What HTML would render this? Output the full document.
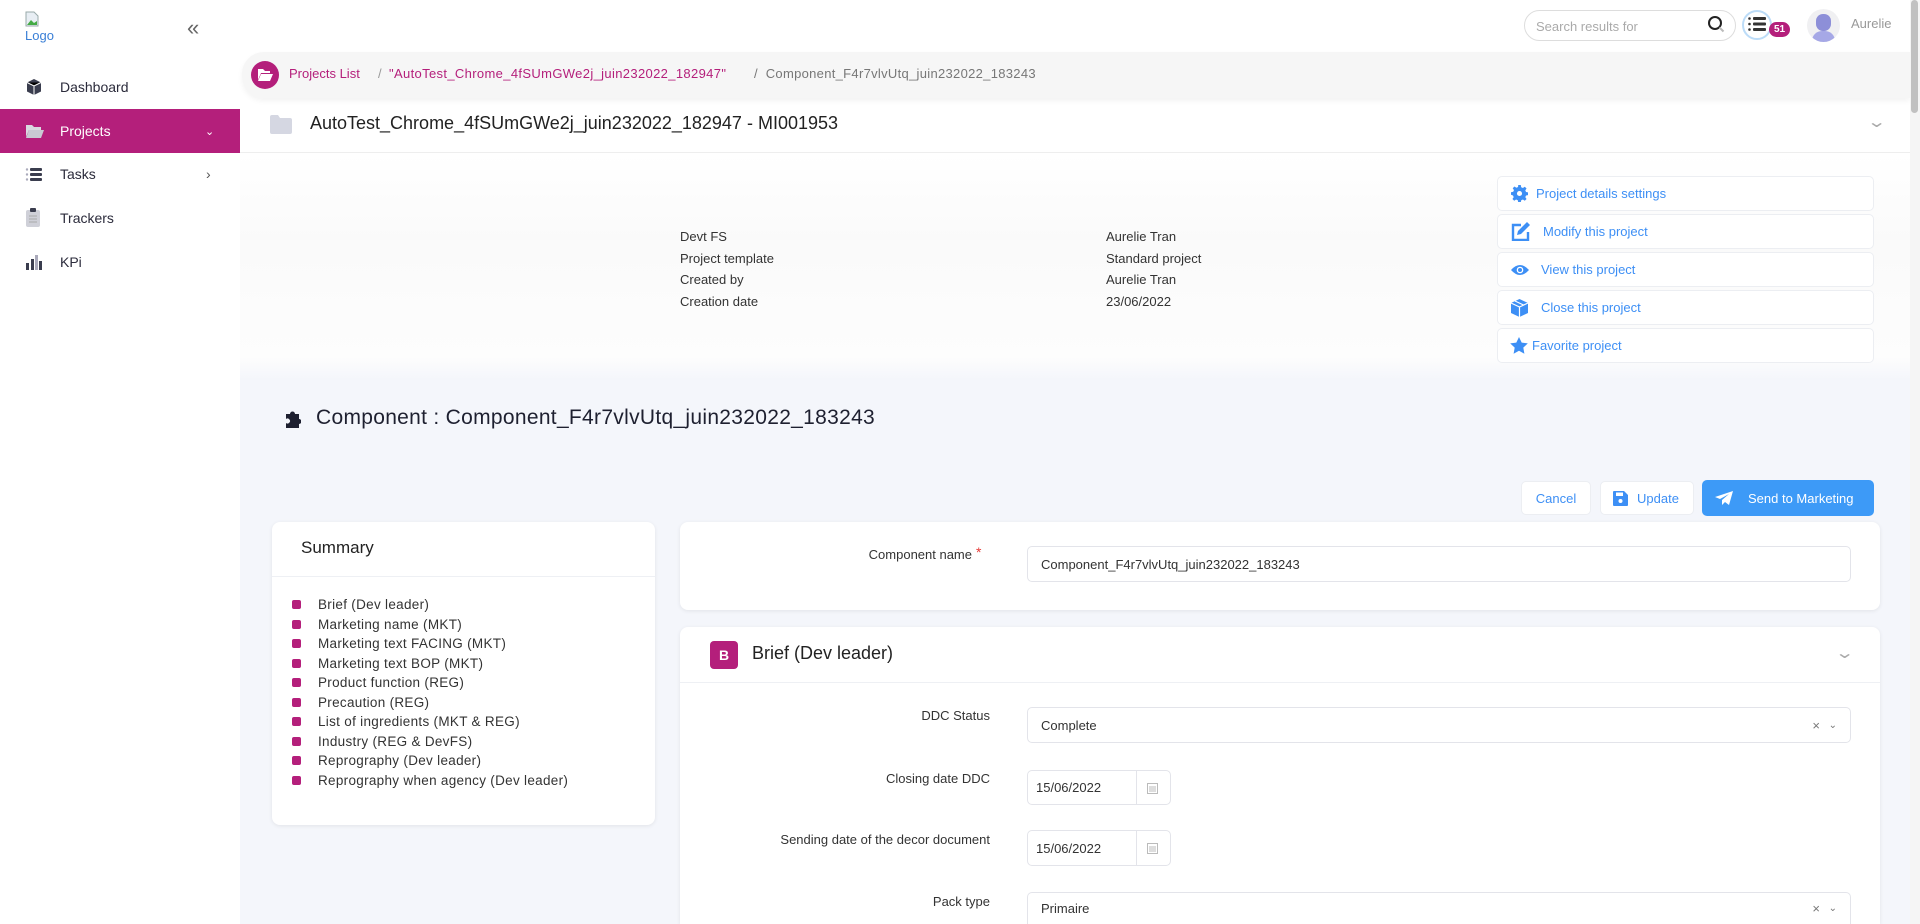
<!DOCTYPE html>
<html style="overflow:hidden;height:924px"><head><meta charset="utf-8"><style>
*{box-sizing:border-box;margin:0;padding:0}
body{width:1920px;height:924px;overflow:hidden;font-family:"Liberation Sans",sans-serif;background:#fff;position:relative;color:#222}
.a{position:absolute}
.side{left:0;top:0;width:240px;height:924px;background:#fff}
.nav{left:0;width:240px;height:44px;display:flex;align-items:center;font-size:14px;color:#2b2b3b}
.nav svg{position:absolute;left:25px}
.nav span{position:absolute;left:60px}
.proj{background:#b41f7b;color:#fff}
.lbl{font-size:13px;color:#333}
.btn{border:1px solid #eceef2;border-radius:5px;background:#fff;color:#3d8ff5;font-size:13px;display:flex;align-items:center}
.card{background:#fff;border-radius:8px;box-shadow:0 1px 4px rgba(0,0,0,.08)}
.li{left:292px;font-size:13.5px;letter-spacing:.3px;color:#333;display:flex;align-items:center}
.li i{width:9px;height:9px;background:#b41f7b;border-radius:2px;margin-right:17px;display:inline-block}
.in{border:1px solid #e3e4ea;border-radius:5px;background:#fff;font-size:13px;color:#333;display:flex;align-items:center;padding-left:13px}
.fl{font-size:13px;color:#333;text-align:right;width:300px}
</style></head><body>
<div class="a side"></div>
<svg class="a" style="left:25px;top:11px" width="14" height="16" viewBox="0 0 14 16"><path d="M1 1h8l4 4v10H1z" fill="#e8eef4" stroke="#9aa" stroke-width="1"/><path d="M2 14l4-5 3 3 3-2v4z" fill="#4a4"/></svg>
<div class="a" style="left:25px;top:28px;font-size:13px;color:#3a7fd6">Logo</div>
<div class="a" style="left:187px;top:15px;font-size:22px;color:#666">«</div>
<div class="a nav" style="top:65px"><svg width="18" height="18" viewBox="0 0 18 18"><path d="M9 1l7 3.5v9L9 17 2 13.5v-9z" fill="#3a3d4e"/><path d="M2 4.5L9 8l7-3.5M9 8v9" stroke="#fff" stroke-width="1"/></svg><span>Dashboard</span></div>
<div class="a nav proj" style="top:109px"><svg width="19" height="16" viewBox="0 0 19 16"><path d="M1 2h6l2 2h7v3H4L1 14z" fill="#d9d9e0"/><path d="M4 7h15l-3 8H1z" fill="#c9c9d3"/></svg><span>Projects</span><b class="a" style="left:205px;font-weight:normal;font-size:11px">&#8964;</b></div>
<div class="a nav" style="top:152px"><svg width="18" height="16" viewBox="0 0 18 16"><g fill="#3a3d4e"><rect x="5" y="2" width="12" height="3" rx="1"/><rect x="5" y="7" width="12" height="3" rx="1"/><rect x="5" y="12" width="12" height="3" rx="1"/></g><g fill="#aab"><circle cx="2" cy="3.5" r="1.2"/><circle cx="2" cy="8.5" r="1.2"/><circle cx="2" cy="13.5" r="1.2"/></g></svg><span>Tasks</span><b class="a" style="left:206px;font-weight:normal;color:#555">›</b></div>
<div class="a nav" style="top:196px"><svg width="16" height="20" viewBox="0 0 16 20"><rect x="1" y="2" width="14" height="17" rx="2" fill="#cfd0d8"/><rect x="5" y="0" width="6" height="4" rx="1" fill="#3a3d4e"/><path d="M4 8h8M4 11h8M4 14h8" stroke="#aaa"/></svg><span>Trackers</span></div>
<div class="a nav" style="top:240px"><svg width="18" height="16" viewBox="0 0 18 16"><g fill="#3a3d4e"><rect x="1" y="9" width="3" height="7"/><rect x="6" y="5" width="3" height="11"/><rect x="14" y="7" width="3" height="9"/></g><rect x="10" y="1" width="3" height="15" fill="#aab"/></svg><span>KPi</span></div>

<div class="a" style="left:1524px;top:10px;width:212px;height:31px;border:1px solid #ddd;border-radius:16px;font-size:13px;color:#aaa;padding:8px 11px">Search results for</div>
<svg class="a" style="left:1707px;top:15px" width="18" height="18" viewBox="0 0 18 18"><circle cx="8" cy="8" r="6" fill="none" stroke="#222" stroke-width="2"/><path d="M12.5 12.5l4 4" stroke="#bbb" stroke-width="2"/></svg>
<div class="a" style="left:1742px;top:10px;width:30px;height:30px;border-radius:50%;border:2px solid #bcdcf8"></div>
<svg class="a" style="left:1748px;top:17px" width="18" height="14" viewBox="0 0 18 14"><g fill="#333"><rect x="5" y="0" width="13" height="3" rx="1"/><rect x="5" y="5.5" width="13" height="3" rx="1"/><rect x="5" y="11" width="13" height="3" rx="1"/><circle cx="1.5" cy="1.5" r="1.3"/><circle cx="1.5" cy="7" r="1.3"/><circle cx="1.5" cy="12.5" r="1.3"/></g></svg>
<div class="a" style="left:1769px;top:22px;width:21px;height:15px;border-radius:8px;background:#b41f7b;color:#fff;font-size:10px;font-weight:bold;text-align:center;line-height:15px">51</div>
<div class="a" style="left:1807px;top:9px;width:33px;height:33px;border-radius:50%;background:#f0f0f2;overflow:hidden"><div class="a" style="left:9px;top:5px;width:15px;height:17px;border-radius:7px;background:#8d8fd8"></div><div class="a" style="left:5px;top:22px;width:23px;height:14px;border-radius:10px 10px 0 0;background:#a6a8e6"></div></div>
<div class="a" style="left:1851px;top:16px;font-size:13px;color:#999">Aurelie</div>

<div class="a" style="left:242px;top:52px;width:1668px;height:46px;background:#f6f6f6;border-radius:22px 0 0 22px;box-shadow:0 3px 6px rgba(0,0,0,.05)"></div>
<div class="a" style="left:251px;top:61px;width:28px;height:28px;border-radius:50%;background:#b41f7b"></div>
<svg class="a" style="left:257px;top:68px" width="16" height="14" viewBox="0 0 16 14"><path d="M1 1h5l2 2h5v2H4L1 12z" fill="#fff"/><path d="M4 6h12l-3 7H1z" fill="#fff"/></svg>
<div class="a" style="left:289px;top:66px;font-size:13px;color:#b41f7b">Projects List</div>
<div class="a" style="left:378px;top:66px;font-size:13px;color:#999">/</div>
<div class="a" style="left:389px;top:66px;font-size:13px;letter-spacing:.35px;color:#b41f7b">"AutoTest_Chrome_4fSUmGWe2j_juin232022_182947"</div>
<div class="a" style="left:754px;top:66px;font-size:13px;letter-spacing:.3px;color:#777">/ &nbsp;Component_F4r7vlvUtq_juin232022_183243</div>

<svg class="a" style="left:270px;top:115px" width="22" height="19" viewBox="0 0 22 19"><path d="M0 2a2 2 0 012-2h6l2 3h10a2 2 0 012 2v12a2 2 0 01-2 2H2a2 2 0 01-2-2z" fill="#d5d7e2"/></svg>
<div class="a" style="left:310px;top:113px;font-size:18px;color:#222">AutoTest_Chrome_4fSUmGWe2j_juin232022_182947 - MI001953</div>
<div class="a" style="left:1870px;top:112px;font-size:16px;color:#aaa;transform:scaleX(1.5)">&#8964;</div>
<div class="a" style="left:240px;top:152px;width:1670px;height:1px;background:#eee"></div>
<div class="a" style="left:240px;top:153px;width:1670px;height:227px;background:linear-gradient(#fff,#fafafa 40%,#fdfdfd 90%,#f4f6fb)"></div>

<div class="a lbl" style="left:680px;top:226px;line-height:21.5px">Devt FS<br>Project template<br>Created by<br>Creation date</div>
<div class="a lbl" style="left:1106px;top:226px;line-height:21.5px">Aurelie Tran<br>Standard project<br>Aurelie Tran<br>23/06/2022</div>

<div class="a btn" style="left:1497px;top:176px;width:377px;height:35px;padding-left:13px"><svg width="17" height="17" viewBox="0 0 20 20"><path fill="#3d8ff5" d="M8.5 0h3l.5 2.6 2 .9 2.2-1.5 2.1 2.1-1.5 2.2.9 2 2.6.5v3l-2.6.5-.9 2 1.5 2.2-2.1 2.1-2.2-1.5-2 .9-.5 2.6h-3l-.5-2.6-2-.9-2.2 1.5-2.1-2.1 1.5-2.2-.9-2L0 11.5v-3l2.6-.5.9-2L2 3.8 4.1 1.7 6.3 3.2l2-.9z"/><circle cx="10" cy="10" r="3" fill="#fff"/></svg><span style="margin-left:8px">Project details settings</span></div>
<div class="a btn" style="left:1497px;top:214px;width:377px;height:35px;padding-left:13px"><svg width="20" height="19" viewBox="0 0 20 19"><path d="M10 3H2v15h15v-8" fill="none" stroke="#3d8ff5" stroke-width="2.4"/><path d="M16 0l3 3-9 9-4 1 1-4z" fill="#3d8ff5"/></svg><span style="margin-left:12px">Modify this project</span></div>
<div class="a btn" style="left:1497px;top:252px;width:377px;height:35px;padding-left:13px"><svg width="18" height="12" viewBox="0 0 18 12"><path d="M0 6Q9-4 18 6 9 16 0 6z" fill="#3d8ff5"/><circle cx="9" cy="6" r="3.3" fill="#fff"/><circle cx="9" cy="6" r="2" fill="#3d8ff5"/></svg><span style="margin-left:12px">View this project</span></div>
<div class="a btn" style="left:1497px;top:290px;width:377px;height:35px;padding-left:13px"><svg width="17" height="18" viewBox="0 0 17 18"><path d="M8.5 0L17 4v10l-8.5 4L0 14V4z" fill="#3d8ff5"/><path d="M0 4l8.5 4L17 4M8.5 8v10M4 2l8.5 4" stroke="#fff" stroke-width="1.2" fill="none"/></svg><span style="margin-left:13px">Close this project</span></div>
<div class="a btn" style="left:1497px;top:328px;width:377px;height:35px;padding-left:12px"><svg width="18" height="17" viewBox="0 0 18 17"><path d="M9 0l2.7 5.6 6.1.8-4.5 4.2 1.1 6.1L9 13.8l-5.4 2.9 1.1-6.1L.2 6.4l6.1-.8z" fill="#3d8ff5"/></svg><span style="margin-left:4px">Favorite project</span></div>

<div class="a" style="left:240px;top:380px;width:1670px;height:544px;background:#f4f6fb"></div>
<svg class="a" style="left:284px;top:410px" width="17" height="18" viewBox="0 0 17 18"><path d="M2 4h4a2.5 2.5 0 115 0h4v5a2.5 2.5 0 110 5v4H2v-5a2.5 2.5 0 100-4z" fill="#1e2030"/></svg>
<div class="a" style="left:316px;top:406px;font-size:21px;letter-spacing:.3px;color:#1e2030">Component : Component_F4r7vlvUtq_juin232022_183243</div>

<div class="a btn" style="left:1521px;top:481px;width:70px;height:34px;justify-content:center">Cancel</div>
<div class="a btn" style="left:1600px;top:481px;width:94px;height:34px;padding-left:12px"><svg width="15" height="15" viewBox="0 0 15 15"><path d="M0 1a1 1 0 011-1h10l4 4v10a1 1 0 01-1 1H1a1 1 0 01-1-1z" fill="#3d8ff5"/><rect x="3" y="1.5" width="7" height="3.5" fill="#fff"/><circle cx="7.5" cy="10" r="2" fill="#fff"/></svg><span style="margin-left:9px">Update</span></div>
<div class="a btn" style="left:1702px;top:480px;width:172px;height:36px;background:#3d9af7;border-color:#3d9af7;color:#fff;padding-left:12px"><svg width="18" height="14" viewBox="0 0 18 14"><path d="M18 0L0 6l5 2 9-5-7 6v5l3-3 4 3z" fill="#fff"/></svg><span style="margin-left:15px">Send to Marketing</span></div>

<div class="a card" style="left:272px;top:522px;width:383px;height:303px"></div>
<div class="a" style="left:301px;top:538px;font-size:17px;color:#222">Summary</div>
<div class="a" style="left:272px;top:576px;width:383px;height:1px;background:#eef0f4"></div>
<div class="a li" style="top:597px"><i></i>Brief (Dev leader)</div>
<div class="a li" style="top:617px"><i></i>Marketing name (MKT)</div>
<div class="a li" style="top:636px"><i></i>Marketing text FACING (MKT)</div>
<div class="a li" style="top:656px"><i></i>Marketing text BOP (MKT)</div>
<div class="a li" style="top:675px"><i></i>Product function (REG)</div>
<div class="a li" style="top:695px"><i></i>Precaution (REG)</div>
<div class="a li" style="top:714px"><i></i>List of ingredients (MKT &amp; REG)</div>
<div class="a li" style="top:734px"><i></i>Industry (REG &amp; DevFS)</div>
<div class="a li" style="top:753px"><i></i>Reprography (Dev leader)</div>
<div class="a li" style="top:773px"><i></i>Reprography when agency (Dev leader)</div>

<div class="a card" style="left:680px;top:522px;width:1200px;height:88px"></div>
<div class="a fl" style="left:672px;top:547px">Component name</div>
<div class="a" style="left:976px;top:544px;color:#e53935;font-size:14px">*</div>
<div class="a in" style="left:1027px;top:546px;width:824px;height:36px">Component_F4r7vlvUtq_juin232022_183243</div>

<div class="a card" style="left:680px;top:627px;width:1200px;height:297px;border-radius:8px 8px 0 0"></div>
<div class="a" style="left:710px;top:641px;width:28px;height:28px;border-radius:4px;background:#b41f7b;color:#fff;font-size:14px;font-weight:bold;text-align:center;line-height:28px">B</div>
<div class="a" style="left:752px;top:643px;font-size:18px;color:#222">Brief (Dev leader)</div>
<div class="a" style="left:1838px;top:643px;font-size:16px;color:#aaa;transform:scaleX(1.5)">&#8964;</div>
<div class="a" style="left:680px;top:682px;width:1200px;height:1px;background:#eef0f4"></div>

<div class="a fl" style="left:690px;top:708px">DDC Status</div>
<div class="a in" style="left:1027px;top:707px;width:824px;height:36px">Complete<span class="a" style="right:30px;color:#777">×</span><span class="a" style="right:13px;color:#777;font-size:10px">&#8964;</span></div>
<div class="a fl" style="left:690px;top:771px">Closing date DDC</div>
<div class="a in" style="left:1027px;top:770px;width:144px;height:35px;padding-left:8px">15/06/2022<span class="a" style="left:108px;top:0;width:1px;height:33px;background:#e3e4ea"></span><svg class="a" style="left:119px;top:11px" width="11" height="12" viewBox="0 0 11 12"><rect x="0.5" y="1.5" width="10" height="10" fill="none" stroke="#bbb"/><path d="M2 5h7M2 7h7M2 9h7" stroke="#bbb"/></svg></div>
<div class="a fl" style="left:690px;top:832px">Sending date of the decor document</div>
<div class="a in" style="left:1027px;top:830px;width:144px;height:36px;padding-left:8px">15/06/2022<span class="a" style="left:108px;top:0;width:1px;height:34px;background:#e3e4ea"></span><svg class="a" style="left:119px;top:11px" width="11" height="12" viewBox="0 0 11 12"><rect x="0.5" y="1.5" width="10" height="10" fill="none" stroke="#bbb"/><path d="M2 5h7M2 7h7M2 9h7" stroke="#bbb"/></svg></div>
<div class="a fl" style="left:690px;top:894px">Pack type</div>
<div class="a in" style="left:1027px;top:892px;width:824px;height:32px;border-radius:5px 5px 0 0;border-bottom:none">Primaire<span class="a" style="right:30px;color:#777">×</span><span class="a" style="right:13px;color:#777;font-size:10px">&#8964;</span></div>

<div class="a" style="left:1910px;top:0;width:10px;height:924px;background:#f5f5f5"></div>
<div class="a" style="left:1911px;top:0;width:7px;height:113px;background:#c1c1c1;border-radius:4px"></div>
</body></html>
